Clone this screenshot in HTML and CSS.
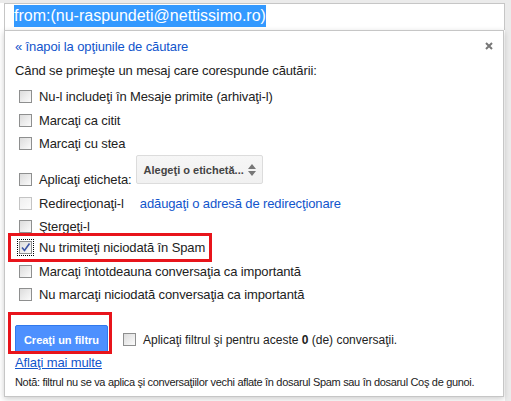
FILE: index.html
```html
<!DOCTYPE html>
<html lang="ro">
<head>
  <meta charset="UTF-8" />
  <meta name="viewport" content="width=device-width, initial-scale=1" />
  <title>Creaţi un filtru</title>
  <link rel="stylesheet" href="styles.css">
</head>
<body>
  <div class="wrap">
    <div class="search"><span class="query">from:(nu-raspundeti@nettissimo.ro)</span></div>

    <div class="panel">
      <span class="close" aria-label="Închideţi">
        <svg width="8" height="8" viewBox="0 0 8 8"><path d="M1 1L7 7M7 1L1 7" stroke="#777" stroke-width="2" /></svg>
      </span>

      <a class="back" href="#">« înapoi la opţiunile de căutare</a>
      <div class="intro">Când se primeşte un mesaj care corespunde căutării:</div>

      <!-- actiuni -->
      <div class="opt first"><span class="box"></span><span>Nu-l includeţi în Mesaje primite (arhivaţi-l)</span></div>
      <div class="opt second"><span class="box"></span><span>Marcaţi ca citit</span></div>
      <div class="opt"><span class="box"></span><span>Marcaţi cu stea</span></div>
      <div class="opt label-row">
        <span class="box"></span><span>Aplicaţi eticheta:</span>
        <span class="select">Alegeţi o etichetă...
          <svg width="8" height="12" viewBox="0 0 8 12"><path d="M4 0L8 5H0Z M0 7H8L4 12Z" fill="#777" /></svg>
        </span>
      </div>
      <div class="opt forward"><span class="box off"></span><span>Redirecţionaţi-l</span><a class="fwd-link" href="#">adăugaţi o adresă de redirecţionare</a></div>
      <div class="opt del"><span class="box"></span><span>Ştergeţi-l</span></div>
      <div class="opt spam"><span class="box checked"><svg width="11" height="11" viewBox="0 0 11 11"><path d="M2 5.5L4.5 8.5L9.5 1.5" stroke="#3c55a5" stroke-width="1.6" fill="none" /></svg></span><span>Nu trimiteţi niciodată în Spam</span></div>
      <div class="opt imp"><span class="box"></span><span>Marcaţi întotdeauna conversaţia ca importantă</span></div>
      <div class="opt"><span class="box"></span><span>Nu marcaţi niciodată conversaţia ca importantă</span></div>

      <div class="actions">
        <button class="create">Creaţi un filtru</button>
        <span class="box"></span>
        <span>Aplicaţi filtrul şi pentru aceste <b>0</b> (de) conversaţii.</span>
      </div>
      <a class="more" href="#">Aflaţi mai multe</a>
      <div class="note">Notă: filtrul nu se va aplica şi conversaţiilor vechi aflate în dosarul Spam sau în dosarul Coş de gunoi.</div>
    </div>
  </div>

  <div class="mark mark-spam"></div>
  <div class="mark mark-create"></div>
</body>
</html>
```

FILE: styles.css
```css
body {
  margin: 0;
  background: #ebebeb;
  font-family: "Liberation Sans", Arial, sans-serif;
  font-size: 13px;
  color: #222;
}
a {
  color: #15c;
  text-decoration: none;
}
.wrap {
  margin-top: 3px;
  width: 505px;
  height: 398px;
  padding-left: 4px;
  box-sizing: border-box;
  background: #fff;
}
.search {
  width: 501px;
  height: 27px;
  box-sizing: border-box;
  border: 1px solid #c6c6c6;
  border-bottom: 0;
  padding: 1px 0 0 9px;
}
.query {
  display: inline-block;
  vertical-align: top;
  font-size: 16px;
  line-height: 22px;
  background: #3399ff;
  color: #fff;
}
.panel {
  position: relative;
  width: 500px;
  box-sizing: border-box;
  border: 1px solid #c6c6c6;
  box-shadow: 0 2px 6px rgba(0, 0, 0, 0.2);
  padding: 8px 10px 7px;
  line-height: 16px;
  letter-spacing: -0.12px;
  background: #fff;
}
.close {
  position: absolute;
  top: 11px;
  right: 10px;
  display: flex;
}
.back {
  display: block;
}
.intro {
  margin-top: 8px;
}
.opt {
  display: flex;
  align-items: flex-end;
  margin-top: 7px;
  padding-left: 4px;
}
.opt.first { margin-top: 10px; }
.opt.second { margin-top: 8px; }
.opt.label-row { margin-top: 3px; }
.opt.forward { margin-top: 8px; }
.opt.del { margin-top: 7px; }
.opt.spam { margin-top: 5px; }
.opt.imp { margin-top: 8px; }

.box {
  flex: none;
  width: 13px;
  height: 13px;
  box-sizing: border-box;
  margin: 0 7px 2px 0;
  border: 1px solid #8e8f8f;
  background: linear-gradient(135deg, #dcdcdc, #fbfbfb);
  display: flex;
  align-items: center;
  justify-content: center;
}
.box.off {
  border-color: #c4c4c4;
  background: linear-gradient(135deg, #efefef, #fcfcfc);
}
.box.checked {
  outline: 1px dotted #000;
  outline-offset: 1px;
}
.select {
  display: inline-flex;
  align-items: center;
  justify-content: space-between;
  width: 127px;
  height: 29px;
  box-sizing: border-box;
  margin: 0 0 4px 4px;
  padding: 0 6px 0 7px;
  border: 1px solid #dcdcdc;
  border-radius: 2px;
  background: linear-gradient(#f6f6f6, #f1f1f1);
  font-size: 11px;
  font-weight: bold;
  letter-spacing: 0;
  color: #444;
}
.fwd-link {
  margin-left: 16px;
}
.actions {
  display: flex;
  align-items: center;
  margin-top: 22px;
  font-size: 12px;
  letter-spacing: 0;
}
.actions .box {
  margin: 0 7px 0 15px;
}
.create {
  width: 93px;
  height: 29px;
  padding: 0;
  border: 1px solid #3079ed;
  border-radius: 2px;
  background: #4d90fe;
  color: #fff;
  font-family: inherit;
  font-size: 11px;
  font-weight: bold;
}
.more {
  display: inline-block;
  margin-top: 1px;
  text-decoration: underline;
}
.note {
  margin-top: 4px;
  font-size: 11px;
  line-height: 14px;
  letter-spacing: -0.32px;
  white-space: nowrap;
}
.mark {
  position: absolute;
  border: 3px solid #e8141b;
  box-sizing: border-box;
}
.mark-spam {
  left: 8px;
  top: 233px;
  width: 204px;
  height: 29px;
}
.mark-create {
  left: 8px;
  top: 312px;
  width: 104px;
  height: 42px;
}
```
